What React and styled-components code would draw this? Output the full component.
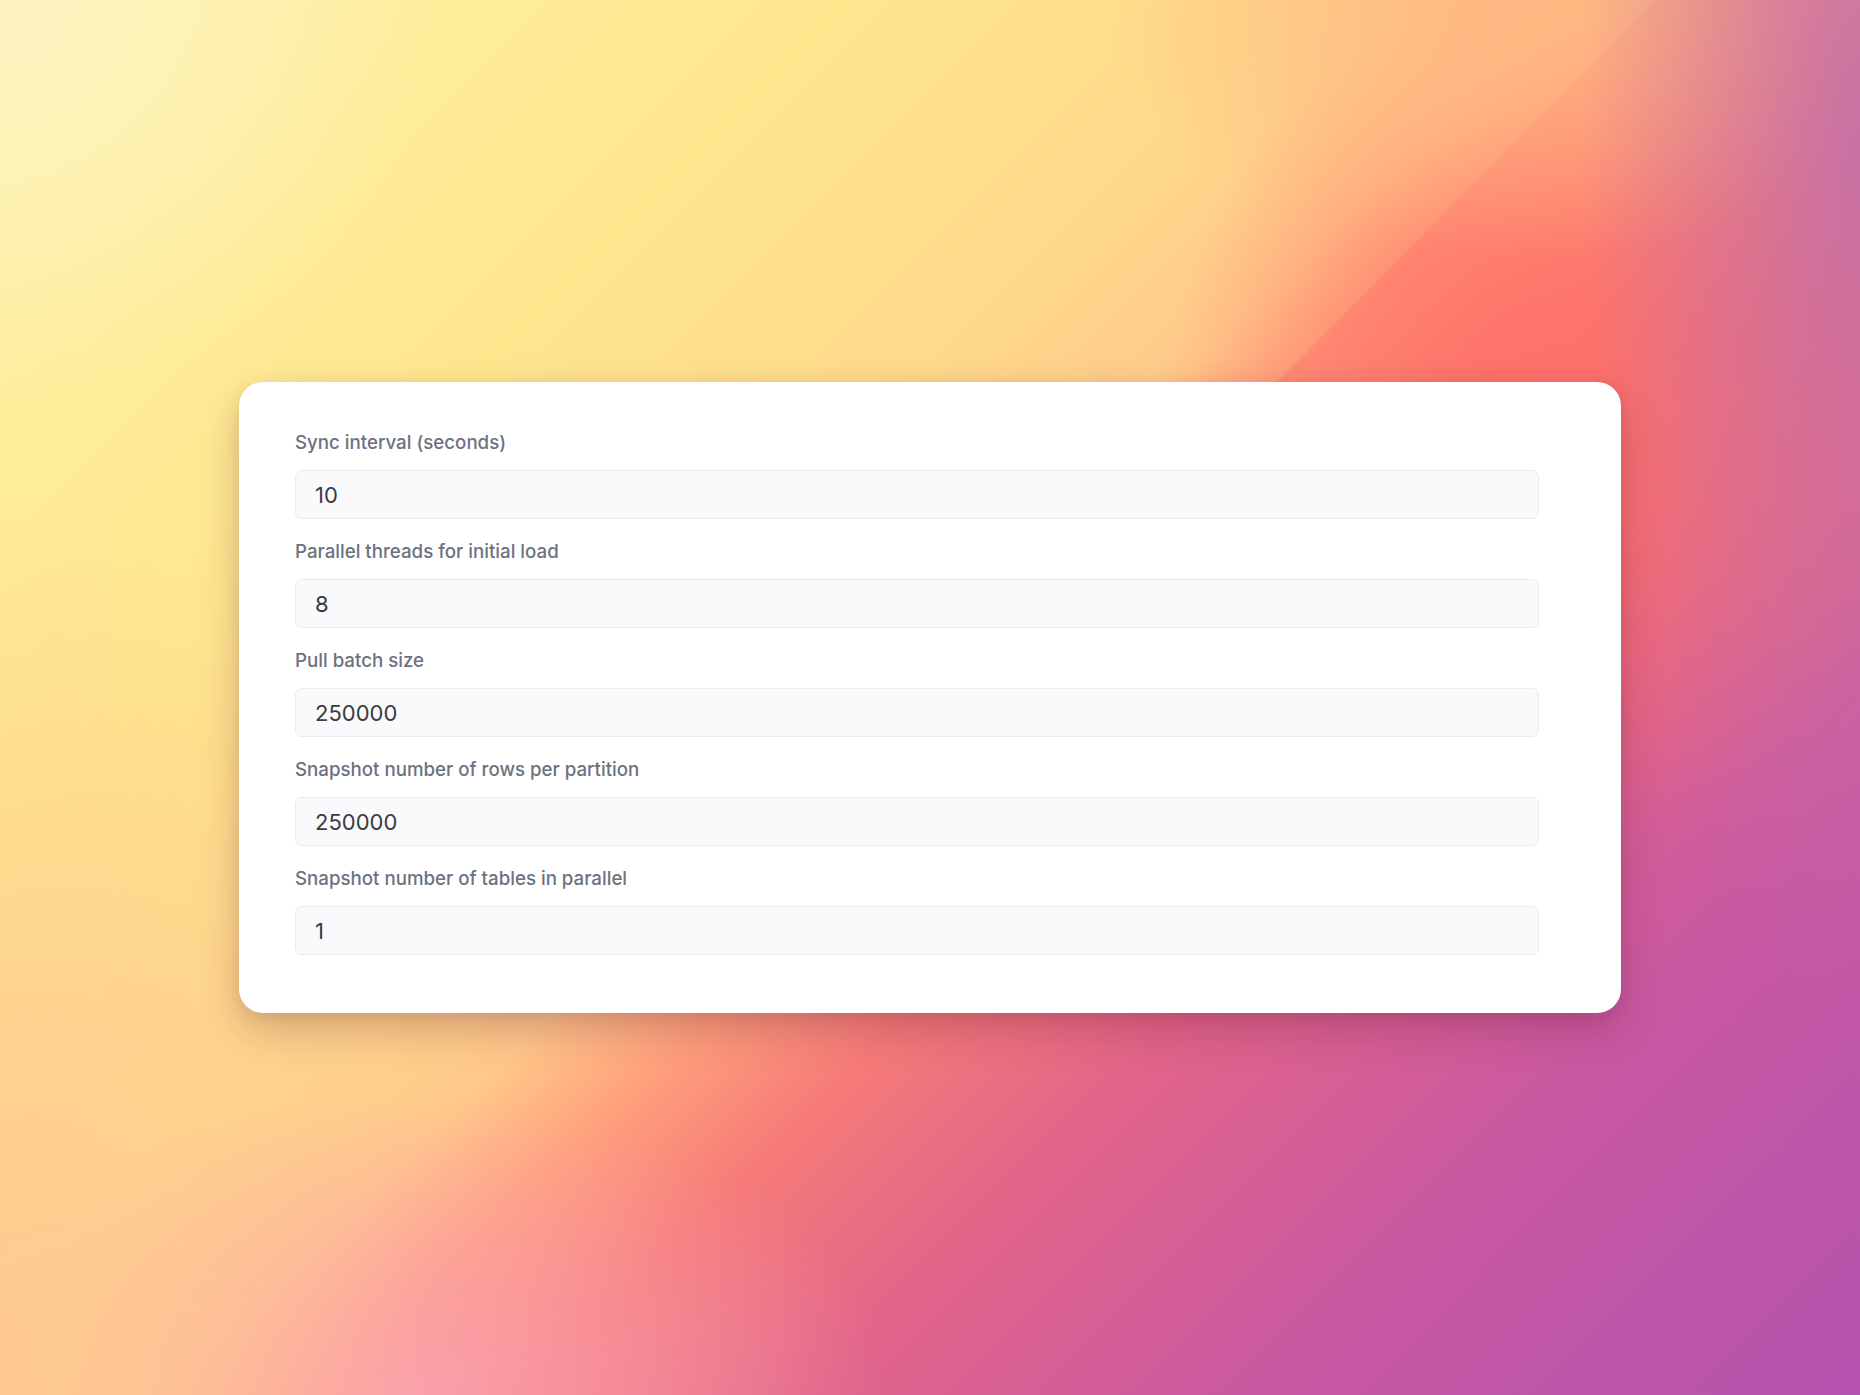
import React from "react";
import styled, { createGlobalStyle } from "styled-components";

const GlobalStyle = createGlobalStyle`
  html, body {
    margin: 0;
    padding: 0;
    height: 100%;
  }
  body {
    font-family: Inter, "Noto Sans", "Liberation Sans", sans-serif;
  }
  #root {
    min-height: 100vh;
  }
  * { box-sizing: border-box; }
`;

const Backdrop = styled.main`
  min-height: 100vh;
  width: 100%;
  display: flex;
  align-items: center;
  justify-content: center;
  background:
    radial-gradient(ellipse 440px 400px at 0% 0%, rgba(253, 243, 196, 0.9) 0%, rgba(253, 243, 196, 0) 100%),
    radial-gradient(ellipse 430px 900px at 0% 100%, rgba(255, 201, 145, 1) 0%, rgba(255, 201, 145, 0) 100%),
    radial-gradient(ellipse 480px 300px at 22% 100%, rgba(250, 162, 178, 0.9) 0%, rgba(250, 162, 178, 0) 100%),
    radial-gradient(ellipse 280px 900px at 100% 10%, rgba(196, 112, 168, 0.92) 0%, rgba(196, 112, 168, 0) 100%),
    radial-gradient(ellipse 420px 260px at 82% 0%, rgba(255, 182, 130, 1) 0%, rgba(255, 182, 130, 0) 100%),
    radial-gradient(ellipse 380px 430px at 83% 30%, rgba(255, 112, 104, 1) 0%, rgba(255, 112, 104, 0) 100%),
    conic-gradient(from 0deg at 1100px 560px,
      rgba(255, 150, 120, 0) 0deg,
      rgba(255, 150, 120, 0) 44.6deg,
      rgba(255, 150, 120, 0.9) 45deg,
      rgba(248, 112, 108, 0.55) 70deg,
      rgba(248, 112, 108, 0) 100deg,
      rgba(248, 112, 108, 0) 360deg),
    linear-gradient(135deg, #fff3aa 0%, #fee78e 25%, #fed98a 40%, #ffc98a 48%, #ffa07c 53%, #f67b78 59%, #e1648a 68%, #c858a2 82%, #b453af 100%);
`;

const Card = styled.section`
  width: 1382px;
  background: #ffffff;
  border-radius: 24px;
  padding: 49px 82px 58px 56px;
  display: flex;
  flex-direction: column;
  gap: 21px;
  box-shadow: 0 18px 40px rgba(90, 20, 50, 0.24), 0 4px 14px rgba(60, 20, 20, 0.08);
`;

const Field = styled.label`
  display: flex;
  flex-direction: column;
  gap: 15px;
`;

const LabelText = styled.span`
  font-family: Inter, "Noto Sans", sans-serif;
  font-size: 18.7px;
  line-height: 24px;
  font-weight: 500;
  color: #6b7280;
`;

const NumberInput = styled.input`
  width: 100%;
  height: 49px;
  padding: 0 19px;
  font-family: Inter, "Noto Sans", sans-serif;
  font-size: 22px;
  font-weight: 400;
  color: #3a3a42;
  background: #fafafc;
  border: 1.5px solid #ebebef;
  border-radius: 7px;
  outline: none;
`;

const fields = [
  { label: "Sync interval (seconds)", value: "10" },
  { label: "Parallel threads for initial load", value: "8" },
  { label: "Pull batch size", value: "250000" },
  { label: "Snapshot number of rows per partition", value: "250000" },
  { label: "Snapshot number of tables in parallel", value: "1" },
];

export default function App() {
  return (
    <>
      <GlobalStyle />
      <Backdrop>
        <Card>
          {fields.map((f) => (
            <Field key={f.label}>
              <LabelText>{f.label}</LabelText>
              <NumberInput type="text" value={f.value} readOnly />
            </Field>
          ))}
        </Card>
      </Backdrop>
    </>
  );
}
